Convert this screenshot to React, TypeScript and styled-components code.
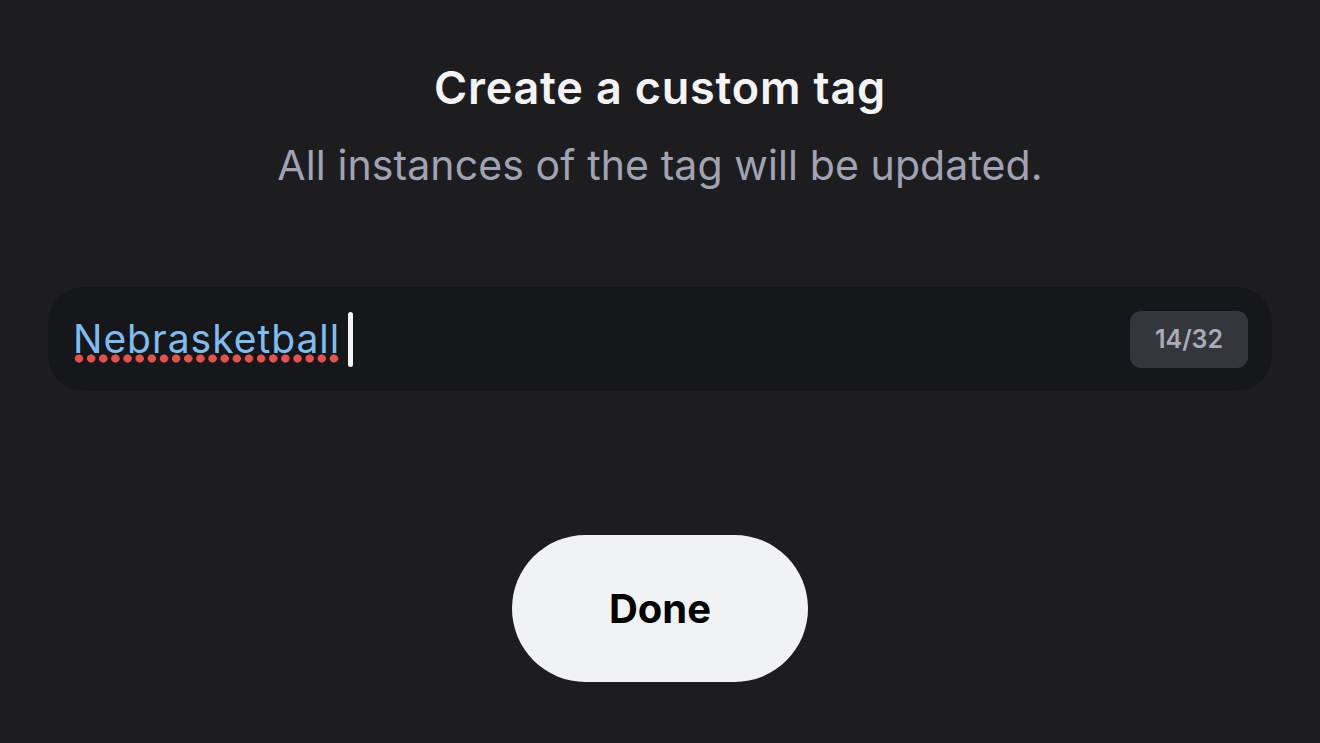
import React from "react";
import styled, { createGlobalStyle } from "styled-components";

const GlobalStyle = createGlobalStyle`
  html, body {
    margin: 0;
    padding: 0;
    background: #1d1d1f;
    font-family: Inter, "Noto Sans", sans-serif;
  }
`;

const Page = styled.div`
  width: 1320px;
  height: 743px;
  box-sizing: border-box;
  padding: 60px 48px 0 48px;
  display: flex;
  flex-direction: column;
  align-items: center;
`;

const Title = styled.h1`
  margin: 0;
  font-size: 45px;
  font-weight: 600;
  line-height: 56px;
  color: #f4f4f6;
  letter-spacing: 0.8px;
`;

const Subtitle = styled.p`
  margin: 25px 0 0;
  font-size: 41px;
  font-weight: 400;
  line-height: 48px;
  color: #a1a3b4;
  letter-spacing: 0.1px;
`;

const Field = styled.div`
  margin-top: 98px;
  align-self: stretch;
  height: 104px;
  box-sizing: border-box;
  padding: 0 24px 0 25px;
  background: #16171b;
  border-radius: 36px;
  display: flex;
  align-items: center;
`;

// misspelt word: blue text with a row of red dots under it
const Value = styled.span`
  font-size: 39px;
  line-height: 50px;
  letter-spacing: 1px;
  color: #7fbcf0;
  background-image: radial-gradient(circle at 6px 4.5px, #e4534d 3.8px, transparent 4.4px);
  background-size: 12px 9px;
  background-repeat: space no-repeat;
  background-position: 0 40px;
`;

const Caret = styled.span`
  width: 5px;
  height: 55px;
  margin-left: 8px;
  border-radius: 3px;
  background: #f4f4f6;
`;

const Counter = styled.span`
  margin-left: auto;
  width: 118px;
  height: 57px;
  border-radius: 11px;
  background: #35363b;
  color: #a9abb9;
  font-size: 25px;
  font-weight: 600;
  display: flex;
  align-items: center;
  justify-content: center;
`;

const DoneButton = styled.button`
  margin-top: 144px;
  width: 296px;
  height: 147px;
  border: none;
  border-radius: 74px;
  background: #f1f2f4;
  color: #000;
  font-family: Inter, "Noto Sans", sans-serif;
  font-size: 40px;
  font-weight: 700;
`;

export default function App() {
  return (
    <>
      <GlobalStyle />
      <Page>
        <Title>Create a custom tag</Title>
        <Subtitle>All instances of the tag will be updated.</Subtitle>
        <Field>
          <Value>Nebrasketball</Value>
          <Caret />
          <Counter>14/32</Counter>
        </Field>
        <DoneButton>Done</DoneButton>
      </Page>
    </>
  );
}
